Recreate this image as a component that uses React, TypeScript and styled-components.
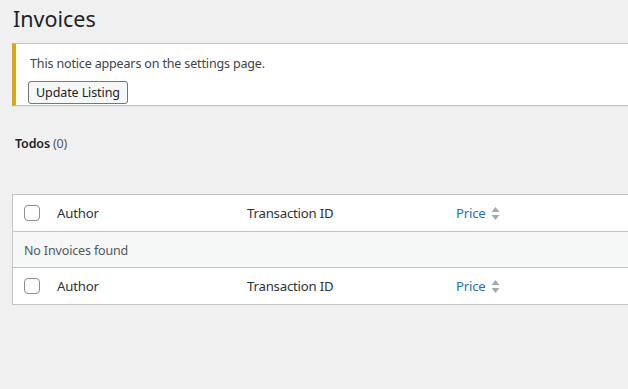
import React from "react";
import styled, { createGlobalStyle } from "styled-components";

const GlobalStyle = createGlobalStyle`
  html, body {
    margin: 0;
    padding: 0;
    background: #f0f0f1;
    overflow: hidden;
  }
  body {
    font-family: "Noto Sans", "Open Sans", "Liberation Sans", sans-serif;
    font-size: 12.5px;
    letter-spacing: -0.15px;
    color: #3c434a;
  }
`;

const Wrap = styled.div`
  width: 720px;
  padding-left: 12px;
`;

const Title = styled.h1`
  margin: 0;
  padding: 4px 0 9px 1px;
  font-size: 21.5px;
  line-height: 30px;
  font-weight: 400;
  letter-spacing: 0;
  color: #1d2327;
`;

const Notice = styled.div`
  background: #fff;
  border: 1px solid #c3c4c7;
  border-left: 4px solid #dba617;
  box-shadow: 0 1px 1px rgba(0, 0, 0, 0.04);
  padding: 0 14px 1px;
`;

const Message = styled.p`
  margin: 10px 0 0;
  line-height: 20px;
  color: #3c434a;
`;

const Button = styled.button`
  margin-top: 7px;
  margin-left: -2px;
  height: 23px;
  padding: 0 7px;
  font-family: inherit;
  font-size: 12.5px;
  letter-spacing: -0.1px;
  color: #1d2327;
  background: #f6f7f7;
  border: 1px solid #767676;
  border-radius: 3px;
  display: block;
`;

const Views = styled.div`
  margin: 28px 0 0 3px;
  line-height: 20px;
`;

const ViewLabel = styled.span`
  font-weight: 600;
  color: #1d2327;
`;

const Count = styled.span`
  color: #50575e;
`;

const Table = styled.div`
  margin-top: 40px;
  background: #fff;
  border: 1px solid #c3c4c7;
`;

const Row = styled.div<{ $shade?: boolean; $last?: boolean }>`
  display: grid;
  grid-template-columns: 35px 190px 209px 1fr;
  align-items: center;
  height: ${(p) => (p.$shade ? 35 : 36)}px;
  background: ${(p) => (p.$shade ? "#f6f7f7" : "#fff")};
  border-bottom: ${(p) => (p.$last ? "none" : "1px solid #c3c4c7")};
`;

const Empty = styled.div`
  grid-column: 1 / -1;
  padding: 2px 0 0 11px;
  color: #50575e;
`;

const CheckCell = styled.div`
  display: flex;
  align-items: center;
  padding-left: 11px;
`;

const Checkbox = styled.span`
  width: 16px;
  height: 16px;
  box-sizing: border-box;
  border: 1px solid #8c8f94;
  border-radius: 4px;
  background: #fff;
`;

const HeadCell = styled.div<{ $link?: boolean }>`
  padding-left: 9px;
  font-size: 13.2px;
  letter-spacing: -0.2px;
  color: ${(p) => (p.$link ? "#2271b1" : "#2c3338")};
  display: flex;
  align-items: center;
  gap: 5px;
`;

const SortIcon = () => (
  <svg width="9" height="15" viewBox="0 0 9 15">
    <path d="M4.5 1 L8.5 6 L0.5 6 Z" fill="#a7aaad" />
    <path d="M4.5 14 L8.5 9 L0.5 9 Z" fill="#a7aaad" />
  </svg>
);

const HeaderRow = ({ last }: { last?: boolean }) => (
  <Row $last={last}>
    <CheckCell>
      <Checkbox />
    </CheckCell>
    <HeadCell>Author</HeadCell>
    <HeadCell>Transaction ID</HeadCell>
    <HeadCell $link>
      Price <SortIcon />
    </HeadCell>
  </Row>
);

export default function App() {
  return (
    <Wrap>
      <GlobalStyle />
      <Title>Invoices</Title>
      <Notice>
        <Message>This notice appears on the settings page.</Message>
        <Button>Update Listing</Button>
      </Notice>
      <Views>
        <ViewLabel>Todos</ViewLabel> <Count>(0)</Count>
      </Views>
      <Table>
        <HeaderRow />
        <Row $shade>
          <Empty>No Invoices found</Empty>
        </Row>
        <HeaderRow last />
      </Table>
    </Wrap>
  );
}
